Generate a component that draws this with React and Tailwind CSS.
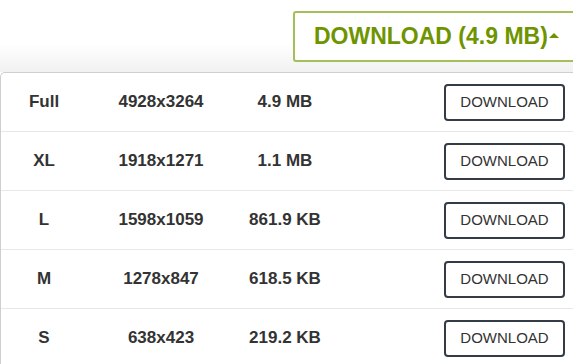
import React from 'react';

const sizes = [
    { name: 'Full', dims: '4928x3264', size: '4.9 MB' },
    { name: 'XL', dims: '1918x1271', size: '1.1 MB' },
    { name: 'L', dims: '1598x1059', size: '861.9 KB' },
    { name: 'M', dims: '1278x847', size: '618.5 KB' },
    { name: 'S', dims: '638x423', size: '219.2 KB' },
];

const App = () => {
    return (
        <div className="w-[573px] h-[364px] overflow-hidden bg-white" style={{ fontFamily: '"Liberation Sans", Arial, sans-serif' }}>
            <div className="h-[72px] pt-[11px] pl-[293px] bg-gradient-to-b from-white from-60% to-[#f1f1f1]">
                <button className="h-[51px] w-[300px] flex items-center pl-[19px] bg-white border-2 border-[#a3bf5a] rounded-[3px] text-[#6e9400] text-[23px] font-bold">
                    DOWNLOAD (4.9 MB)
                    <span className="ml-[1px] mt-[-2px] w-0 h-0 border-l-[5px] border-r-[5px] border-b-[5px] border-l-transparent border-r-transparent border-b-[#6e9400]"></span>
                </button>
            </div>
            <div className="w-[600px] border-t border-l border-[#cfcfcf] rounded-tl-[5px] bg-white">
                {sizes.map((s) => (
                    <div key={s.name} className="h-[59px] flex items-center border-b border-[#e8e8e8] text-[17px] font-bold text-[#333]">
                        <div className="w-[86px] text-center">{s.name}</div>
                        <div className="w-[148px] text-center">{s.dims}</div>
                        <div className="w-[100px] text-center">{s.size}</div>
                        <button className="ml-[109px] w-[121px] h-[37px] border-2 border-[#333c46] rounded-[4px] text-[15px] font-normal text-[#333]">
                            DOWNLOAD
                        </button>
                    </div>
                ))}
            </div>
        </div>
    );
};

export default App;
